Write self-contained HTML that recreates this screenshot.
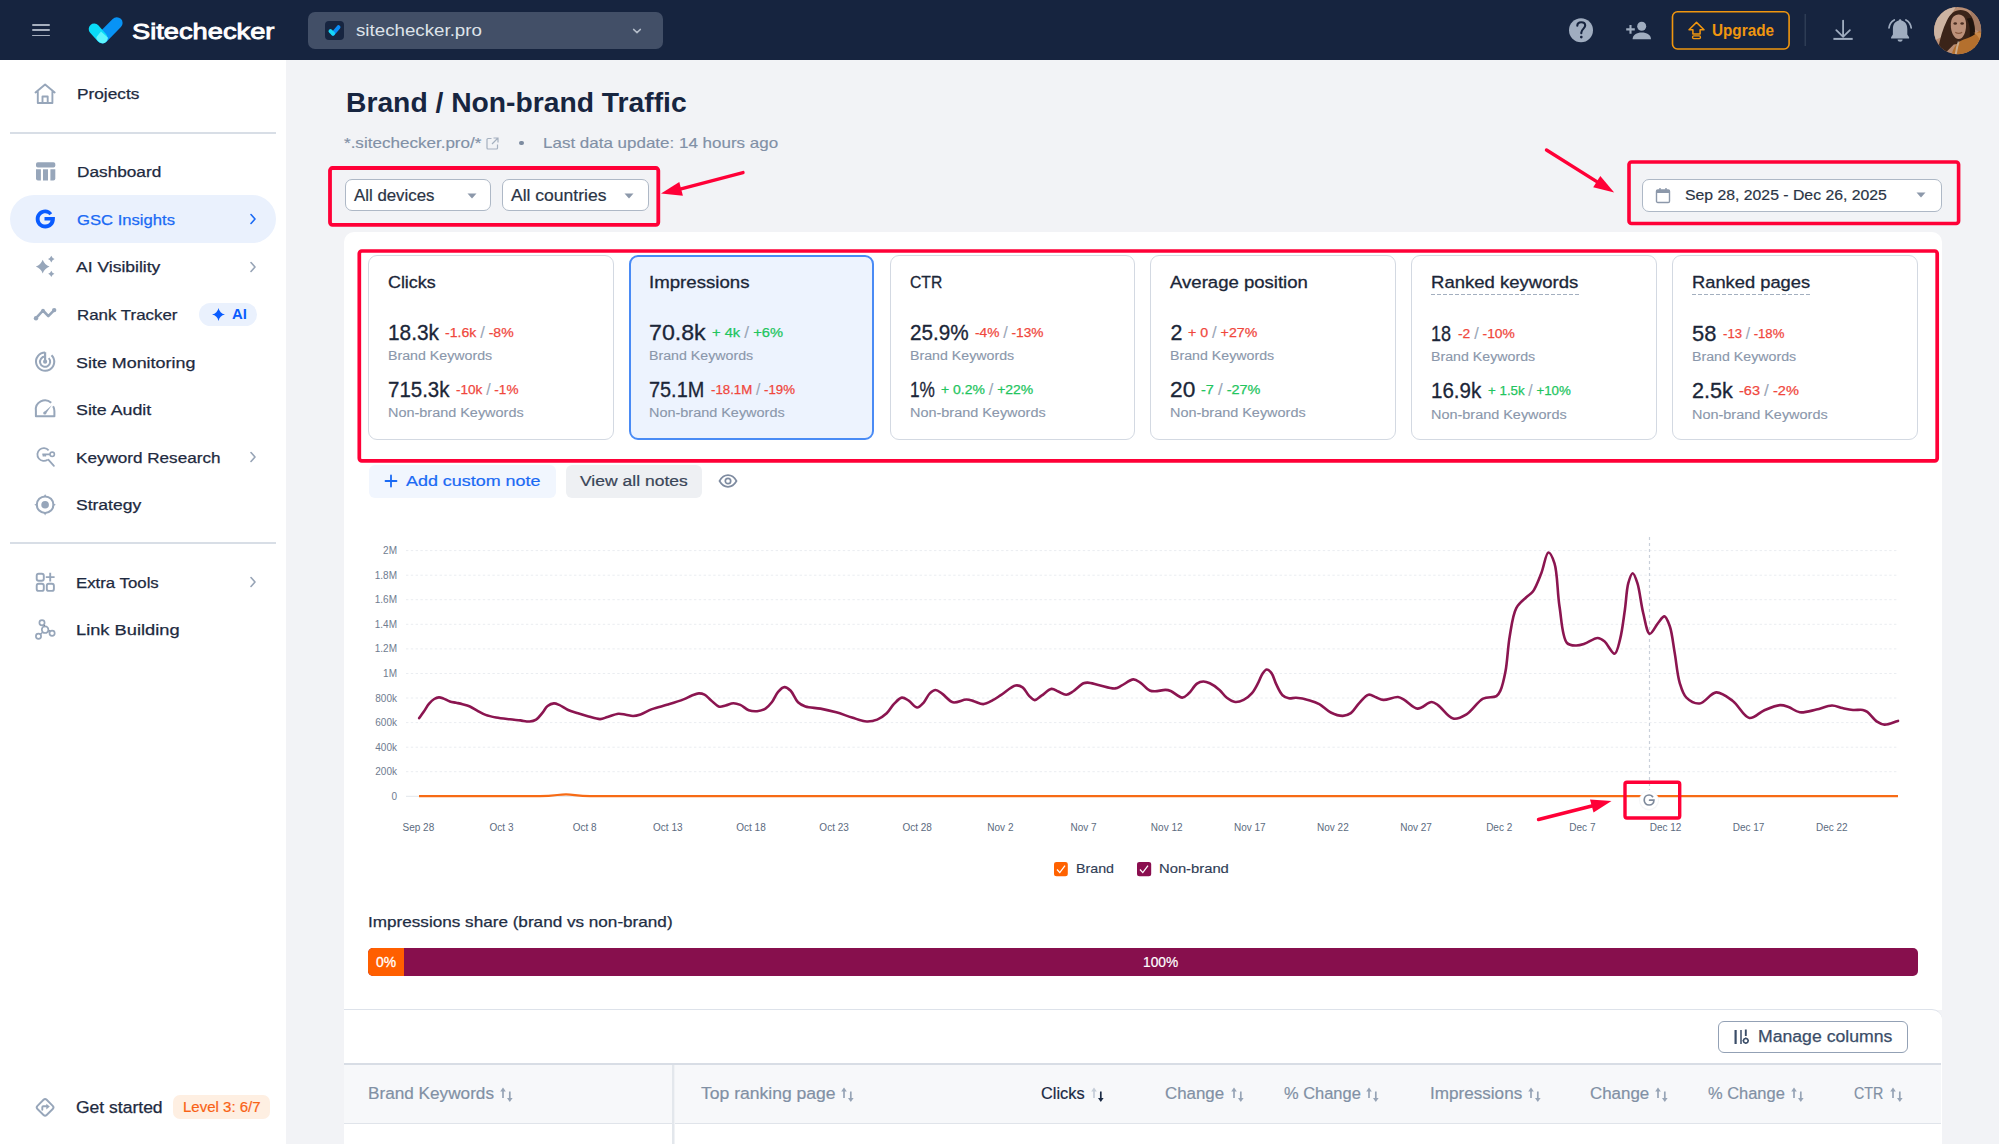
<!DOCTYPE html>
<html><head><meta charset="utf-8"><title>Brand / Non-brand Traffic</title>
<style>
html,body{margin:0;padding:0;width:1999px;height:1144px;overflow:hidden;background:#F2F3F6;}
body{position:relative;font-family:"Liberation Sans",sans-serif;}
.t{position:absolute;line-height:1;white-space:nowrap;}
.r{position:absolute;}
.a{position:absolute;overflow:visible;}
svg text{font-family:"Liberation Sans",sans-serif;}
</style></head><body>
<div class="r" style="left:0.0px;top:0.0px;width:1999.0px;height:1144.0px;background:#F2F3F6;"></div>
<div class="r" style="left:0.0px;top:60.0px;width:286.0px;height:1084.0px;background:#FFFFFF;"></div>
<div class="r" style="left:0.0px;top:0.0px;width:1999.0px;height:60.0px;background:#16243F;"></div>
<div class="r" style="left:31.5px;top:24.2px;width:18.0px;height:1.6px;background:#A6AFBE;border-radius:1px;"></div>
<div class="r" style="left:31.5px;top:29.2px;width:18.0px;height:1.6px;background:#A6AFBE;border-radius:1px;"></div>
<div class="r" style="left:31.5px;top:34.7px;width:18.0px;height:1.6px;background:#A6AFBE;border-radius:1px;"></div>
<svg class="a" style="left:0;top:0" width="140" height="60" viewBox="0 0 140 60">
<defs><clipPath id="lgc"><line x1="117.2" y1="22.6" x2="102.4" y2="37.6" stroke="#000" stroke-width="12" stroke-linecap="round"/><path d="M117.2 22.6 L102.4 37.6" stroke="#000" stroke-width="12"/></clipPath></defs>
<line x1="116.8" y1="23.0" x2="102.4" y2="37.6" stroke="#0893F5" stroke-width="11.6" stroke-linecap="round"/>
<line x1="94.2" y1="29.0" x2="101.9" y2="37.6" stroke="#0ADCF8" stroke-width="11" stroke-linecap="round"/>
<path d="M96.5 37 L101 31.5 L108 37.8 C107.5 42 104.5 43.8 101.9 43.3 C100 43 98.5 41.5 96.5 39 Z" fill="#5EF5FD"/>
</svg>
<div class="t" style="left:131.5px;top:19px;font-size:22.52px;line-height:25px;color:#FFFFFF;transform:scaleX(1.2102);transform-origin:0 0;-webkit-text-stroke:0.90px #FFFFFF;">Sitechecker</div>
<div class="r" style="left:308.4px;top:11.6px;width:354.6px;height:37.8px;background:#424F67;border-radius:7px;"></div>
<div class="r" style="left:325.0px;top:20.6px;width:19.0px;height:19.4px;background:#172540;border-radius:4px;"></div>
<svg class="a" style="left:325px;top:20.6px" width="19" height="19.4" viewBox="0 0 19 19">
<line x1="13.5" y1="6" x2="8" y2="12.5" stroke="#0B8DF7" stroke-width="4" stroke-linecap="round"/>
<line x1="5.5" y1="10" x2="8" y2="12.5" stroke="#16D8F7" stroke-width="4" stroke-linecap="round"/>
</svg>
<div class="t" style="left:356.0px;top:21px;font-size:16.81px;line-height:19px;color:#DEE3EA;transform:scaleX(1.1143);transform-origin:0 0;">sitechecker.pro</div>
<svg class="a" style="left:631px;top:26.5px" width="12" height="8" viewBox="0 0 12 8"><path d="M2.6 2.4 L6 5.6 L9.4 2.4" fill="none" stroke="#B3BCC9" stroke-width="1.5" stroke-linecap="round" stroke-linejoin="round"/></svg>
<svg class="a" style="left:1500px;top:0" width="499" height="60" viewBox="1500 0 499 60">
<circle cx="1581" cy="30.2" r="12" fill="#A0ADC0"/>
<path d="M1577.3 25.8 C1577.3 23.5 1579 22.2 1581.2 22.2 C1583.5 22.2 1585.2 23.6 1585.2 25.6 C1585.2 28.4 1581.6 28.9 1581.3 32.6 L1581.3 33.3" fill="none" stroke="#16233E" stroke-width="2.1" stroke-linecap="round"/>
<circle cx="1581.3" cy="37.1" r="1.35" fill="#16233E"/>
<circle cx="1641.7" cy="26.2" r="4.5" fill="#A0ADC0"/>
<path d="M1632.6 39.2 C1632.6 34.6 1636.8 32.4 1641.8 32.4 C1646.8 32.4 1651 34.6 1651 39.2 Z" fill="#A0ADC0"/>
<path d="M1626.2 29.4 L1634.8 29.4 M1630.5 25.1 L1630.5 33.7" stroke="#A0ADC0" stroke-width="2.1"/>
<rect x="1672.5" y="11.8" width="116.6" height="37.2" rx="5" fill="none" stroke="#F0960F" stroke-width="1.6"/>
<path d="M1696.5 22.4 L1704 29.7 L1700.1 29.7 L1700.1 34 L1692.9 34 L1692.9 29.7 L1689 29.7 Z" fill="none" stroke="#F0960F" stroke-width="1.5" stroke-linejoin="round"/>
<rect x="1692.6" y="35.9" width="7.8" height="2.7" rx="1" fill="none" stroke="#F0960F" stroke-width="1.4"/>
<rect x="1804.6" y="14" width="1.2" height="32" fill="#34425A"/>
<path d="M1843.1 20.6 L1843.1 36.6 M1836.3 30.1 L1843.1 36.8 L1849.9 30.1" fill="none" stroke="#A0ADC0" stroke-width="1.8" stroke-linecap="round"/>
<path d="M1833.4 38.9 L1852.7 38.9" stroke="#A0ADC0" stroke-width="2"/>
<path d="M1900.1 19.2 C1900.9 19.2 1901.4 19.8 1901.4 20.6 C1905.6 21.6 1907.3 25 1907.3 29 L1907.3 34.4 L1909.1 37.2 L1909.1 38.5 L1891.1 38.5 L1891.1 37.2 L1892.9 34.4 L1892.9 29 C1892.9 25 1894.6 21.6 1898.8 20.6 C1898.8 19.8 1899.3 19.2 1900.1 19.2 Z" fill="#A0ADC0"/>
<path d="M1897.6 39.6 L1902.6 39.6 C1902.6 41 1901.5 41.8 1900.1 41.8 C1898.7 41.8 1897.6 41 1897.6 39.6 Z" fill="#A0ADC0"/>
<path d="M1894.3 19.9 C1891.3 21.6 1889.4 24.4 1889 27.8 M1905.9 19.9 C1908.9 21.6 1910.8 24.4 1911.2 27.8" fill="none" stroke="#A0ADC0" stroke-width="1.7" stroke-linecap="round"/>
</svg>
<svg class="a" style="left:1933.7px;top:6.7px" width="47.4" height="47.4" viewBox="0 0 48 48">
<defs><clipPath id="av"><circle cx="24" cy="24" r="24"/></clipPath></defs>
<g clip-path="url(#av)">
<rect width="48" height="48" fill="#B98E74"/>
<path d="M0 0 L22 0 L14 14 L9 30 L0 34 Z" fill="#CDB4A2"/>
<path d="M36 0 L48 0 L48 26 L40 22 Z" fill="#A37A62"/>
<path d="M4 44 C6 32 9 22 13 14 C16 7 21 3 27 3 C33 3 38 7 40 14 C42 21 42 28 41 34 L35 36 L20 38 L10 48 Z" fill="#3B2419"/>
<path d="M17 18 C17 11 20.5 7.5 25 7.5 C29.5 7.5 32.5 11 32.5 18 C32.5 26 29.5 32.5 25 32.5 C20.5 32.5 17 26 17 18 Z" fill="#BC917A"/>
<ellipse cx="21.5" cy="16.8" rx="1.8" ry="1.3" fill="#4A2E22"/><ellipse cx="28.5" cy="16.8" rx="1.8" ry="1.3" fill="#4A2E22"/>
<path d="M21.5 25.5 C23.5 27 26.5 27 28.5 25.5" stroke="#8A5A40" stroke-width="1.2" fill="none"/>
<path d="M33 12 C36 16 37 24 36 33 L41 33 C42 25 41 17 38 11 Z" fill="#1F140E"/>
<path d="M18 48 C20 40 24 35 30 33 C36 31 42 28 46 24 L48 26 L48 48 Z" fill="#B4702E"/>
<path d="M40 26 C44 28 47 33 48 38 L48 26 Z" fill="#C98A4A"/>
<path d="M22 48 C23 42 24 38 25 35" stroke="#D9D2CC" stroke-width="2" fill="none" opacity="0.6"/>
</g></svg>
<div class="t" style="left:1712.0px;top:21px;font-size:16.23px;line-height:18px;color:#F0960F;transform:scaleX(0.9417);transform-origin:0 0;font-weight:700;">Upgrade</div>
<div class="t" style="left:77.2px;top:86px;font-size:14.86px;line-height:16px;color:#1E2A40;transform:scaleX(1.1611);transform-origin:0 0;-webkit-text-stroke:0.25px #1E2A40;">Projects</div>
<div class="r" style="left:10.0px;top:131.6px;width:266.0px;height:2.0px;background:#D8DEE6;"></div>
<div class="t" style="left:76.9px;top:163px;font-size:15.29px;line-height:17px;color:#1E2A40;transform:scaleX(1.1272);transform-origin:0 0;-webkit-text-stroke:0.25px #1E2A40;">Dashboard</div>
<div class="r" style="left:10.0px;top:195.2px;width:266.0px;height:47.5px;background:#EAF1FD;border-radius:24px;"></div>
<div class="t" style="left:76.9px;top:211px;font-size:15.29px;line-height:17px;color:#1A6AF4;transform:scaleX(1.0883);transform-origin:0 0;-webkit-text-stroke:0.25px #1A6AF4;">GSC Insights</div>
<div class="t" style="left:76.4px;top:258px;font-size:15.00px;line-height:17px;color:#1E2A40;transform:scaleX(1.1669);transform-origin:0 0;-webkit-text-stroke:0.25px #1E2A40;">AI Visibility</div>
<div class="t" style="left:76.9px;top:307px;font-size:14.71px;line-height:16px;color:#1E2A40;transform:scaleX(1.1491);transform-origin:0 0;-webkit-text-stroke:0.25px #1E2A40;">Rank Tracker</div>
<div class="r" style="left:199.0px;top:302.5px;width:58.1px;height:23.2px;background:#EAF1FD;border-radius:12px;"></div>
<div class="t" style="left:232.0px;top:306px;font-size:14.78px;line-height:16px;color:#0A5CFE;transform:scaleX(1.0079);transform-origin:0 0;font-weight:700;">AI</div>
<svg class="a" style="left:211.5px;top:308px" width="13" height="13" viewBox="0 0 13 13"><path d="M6.5 0 Q7.6 5.4 13 6.5 Q7.6 7.6 6.5 13 Q5.4 7.6 0 6.5 Q5.4 5.4 6.5 0 Z" fill="#0A5CFE"/></svg>
<div class="t" style="left:76.4px;top:354px;font-size:15.29px;line-height:17px;color:#1E2A40;transform:scaleX(1.1708);transform-origin:0 0;-webkit-text-stroke:0.25px #1E2A40;">Site Monitoring</div>
<div class="t" style="left:76.4px;top:401px;font-size:15.29px;line-height:17px;color:#1E2A40;transform:scaleX(1.1657);transform-origin:0 0;-webkit-text-stroke:0.25px #1E2A40;">Site Audit</div>
<div class="t" style="left:76.4px;top:449px;font-size:15.29px;line-height:17px;color:#1E2A40;transform:scaleX(1.1188);transform-origin:0 0;-webkit-text-stroke:0.25px #1E2A40;">Keyword Research</div>
<div class="t" style="left:76.4px;top:496px;font-size:15.29px;line-height:17px;color:#1E2A40;transform:scaleX(1.1452);transform-origin:0 0;-webkit-text-stroke:0.25px #1E2A40;">Strategy</div>
<div class="r" style="left:10.0px;top:542.4px;width:266.0px;height:2.0px;background:#D8DEE6;"></div>
<div class="t" style="left:76.4px;top:574px;font-size:15.29px;line-height:17px;color:#1E2A40;transform:scaleX(1.0991);transform-origin:0 0;-webkit-text-stroke:0.25px #1E2A40;">Extra Tools</div>
<div class="t" style="left:76.4px;top:621px;font-size:15.29px;line-height:17px;color:#1E2A40;transform:scaleX(1.1949);transform-origin:0 0;-webkit-text-stroke:0.25px #1E2A40;">Link Building</div>
<div class="t" style="left:76.3px;top:1099px;font-size:15.58px;line-height:17px;color:#1E2A40;transform:scaleX(1.1239);transform-origin:0 0;-webkit-text-stroke:0.25px #1E2A40;">Get started</div>
<div class="r" style="left:173.3px;top:1095.2px;width:97.0px;height:23.8px;background:#FEEFE2;border-radius:7px;"></div>
<div class="t" style="left:183.1px;top:1098px;font-size:15.25px;line-height:17px;color:#F96215;transform:scaleX(0.9844);transform-origin:0 0;-webkit-text-stroke:0.20px #F96215;">Level 3: 6/7</div>
<svg class="a" style="left:249px;top:213.3px" width="8" height="12" viewBox="0 0 8 12"><path d="M2 1.5 L6 6 L2 10.5" fill="none" stroke="#1A6AF4" stroke-width="1.6" stroke-linecap="round" stroke-linejoin="round"/></svg>
<svg class="a" style="left:249px;top:260.5px" width="8" height="12" viewBox="0 0 8 12"><path d="M2 1.5 L6 6 L2 10.5" fill="none" stroke="#97A4B6" stroke-width="1.6" stroke-linecap="round" stroke-linejoin="round"/></svg>
<svg class="a" style="left:249px;top:450.5px" width="8" height="12" viewBox="0 0 8 12"><path d="M2 1.5 L6 6 L2 10.5" fill="none" stroke="#97A4B6" stroke-width="1.6" stroke-linecap="round" stroke-linejoin="round"/></svg>
<svg class="a" style="left:249px;top:575.5px" width="8" height="12" viewBox="0 0 8 12"><path d="M2 1.5 L6 6 L2 10.5" fill="none" stroke="#97A4B6" stroke-width="1.6" stroke-linecap="round" stroke-linejoin="round"/></svg>
<svg class="a" style="left:0;top:0" width="286" height="1144" viewBox="0 0 286 1144"><path d="M35.5 92.5 L45.1 84.5 L54.7 92.5 M37.8 91 L37.8 103 L52.4 103 L52.4 91 M42.5 103 L42.5 96.5 L47.7 96.5 L47.7 103" fill="none" stroke="#97A6BA" stroke-width="1.9" stroke-linejoin="round" stroke-linecap="round"/><rect x="36" y="162.3" width="19.3" height="5.3" rx="1.8" fill="#97A6BA"/><path d="M36 169.3 L40.9 169.3 L40.9 180.5 L38 180.5 Q36 180.5 36 178.5 Z" fill="#97A6BA"/><rect x="43" y="169.3" width="5" height="11.2" fill="#97A6BA"/><path d="M50.4 169.3 L55.3 169.3 L55.3 178.5 Q55.3 180.5 53.3 180.5 L50.4 180.5 Z" fill="#97A6BA"/><path d="M52.2 213.3 C50.6 211 48.2 209.5 45.3 209.5 C39.9 209.5 35.7 213.7 35.7 219 C35.7 224.3 39.9 228.4 45.3 228.4 C50.6 228.4 54.9 224.7 54.9 218.4 L54.9 216.9 L44.5 216.9 L44.5 220.6 L50.6 220.6 C49.9 223.2 48 224.6 45.3 224.6 C42 224.6 39.6 222.1 39.6 219 C39.6 215.8 42 213.3 45.3 213.3 C47 213.3 48.3 214 49.3 215.2 Z" fill="#0A5CFF"/><path d="M42.70 259.80 Q44.60 264.70 49.50 266.60 Q44.60 268.50 42.70 273.40 Q40.80 268.50 35.90 266.60 Q40.80 264.70 42.70 259.80 Z" fill="#97A6BA"/><path d="M51.30 255.80 Q52.22 258.18 54.60 259.10 Q52.22 260.02 51.30 262.40 Q50.38 260.02 48.00 259.10 Q50.38 258.18 51.30 255.80 Z" fill="#97A6BA"/><path d="M51.30 270.70 Q52.17 272.93 54.40 273.80 Q52.17 274.67 51.30 276.90 Q50.43 274.67 48.20 273.80 Q50.43 272.93 51.30 270.70 Z" fill="#97A6BA"/><path d="M36 318.2 L43 310.5 L48.3 316.1 L54.2 310.1" fill="none" stroke="#97A6BA" stroke-width="2.6" stroke-linecap="round" stroke-linejoin="round"/><circle cx="36" cy="318.2" r="2.2" fill="#97A6BA"/><circle cx="54.2" cy="310.1" r="2.2" fill="#97A6BA"/><circle cx="43" cy="310.5" r="1.8" fill="#97A6BA"/><path d="M45.1 352.6 A9.1 9.1 0 1 0 51.5 355.2" fill="none" stroke="#97A6BA" stroke-width="2"/><path d="M45.1 356.6 A5.1 5.1 0 1 0 48.7 358.1" fill="none" stroke="#97A6BA" stroke-width="2"/><path d="M45.1 352.2 L45.1 361.7" stroke="#97A6BA" stroke-width="2.2"/><circle cx="45.1" cy="361.7" r="2.1" fill="#97A6BA"/><path d="M51.2 402.8 A9.2 9.2 0 0 0 35.9 410.9 L35.9 416.2 L54.4 416.2 L54.4 410.9 A9.2 9.2 0 0 0 53.1 406.3" fill="none" stroke="#97A6BA" stroke-width="2" stroke-linejoin="round"/><path d="M43.6 412.4 L51.8 405.3 L46 413.6 Z" fill="#97A6BA"/><circle cx="44.8" cy="413" r="1.6" fill="#97A6BA"/><path d="M48.6 450.3 A6.4 6.4 0 1 0 47.7 459.6" fill="none" stroke="#97A6BA" stroke-width="1.8"/><path d="M48.3 459.6 L53.9 465.9" stroke="#97A6BA" stroke-width="1.8" stroke-linecap="round"/><path d="M42.3 454.3 L50 454.3 M43.5 454.3 L43.5 456.5 M45.3 454.3 L45.3 456.5" stroke="#97A6BA" stroke-width="1.7"/><circle cx="52.2" cy="454.3" r="2.2" fill="none" stroke="#97A6BA" stroke-width="1.6"/><circle cx="45.1" cy="504.7" r="8.3" fill="none" stroke="#97A6BA" stroke-width="2"/><circle cx="45.1" cy="504.7" r="3.8" fill="#97A6BA"/><path d="M45.1 494 L43.6 497 L46.6 497 Z M45.1 515.4 L43.6 512.4 L46.6 512.4 Z M34.3 504.7 L37.3 503.2 L37.3 506.2 Z M55.9 504.7 L52.9 503.2 L52.9 506.2 Z" fill="#97A6BA"/><rect x="36.7" y="573.7" width="7.1" height="7.1" rx="2" fill="none" stroke="#97A6BA" stroke-width="1.9"/><rect x="36.7" y="583.8" width="7.1" height="7.1" rx="2" fill="none" stroke="#97A6BA" stroke-width="1.9"/><rect x="46.8" y="583.8" width="7.1" height="7.1" rx="2" fill="none" stroke="#97A6BA" stroke-width="1.9"/><path d="M50.2 572.7 L50.2 581.4 M45.8 577.1 L54.6 577.1" stroke="#97A6BA" stroke-width="1.9"/><path d="M42 622.7 L45.1 629.7 L52.1 633.2 M45.1 629.7 L38.5 636.3" stroke="#97A6BA" stroke-width="1.6"/><circle cx="42" cy="622.7" r="2.6" fill="#fff" stroke="#97A6BA" stroke-width="1.7"/><circle cx="45.1" cy="629.7" r="3.3" fill="#fff" stroke="#97A6BA" stroke-width="1.7"/><circle cx="52.1" cy="633.2" r="2.6" fill="#fff" stroke="#97A6BA" stroke-width="1.7"/><circle cx="38.5" cy="636.3" r="2.6" fill="#fff" stroke="#97A6BA" stroke-width="1.7"/><rect x="38.6" y="1100.9" width="13" height="13" rx="2.2" transform="rotate(45 45.1 1107.4)" fill="none" stroke="#97A6BA" stroke-width="1.9"/><path d="M42.3 1109.8 L42.3 1107.2 Q42.3 1106.3 43.2 1106.3 L47 1106.3" fill="none" stroke="#97A6BA" stroke-width="1.9" stroke-linecap="round"/><path d="M46.3 1103.8 L49.8 1106.6 L46.3 1109.4 Z" fill="#97A6BA"/></svg>
<div class="t" style="left:345.7px;top:87px;font-size:27.25px;line-height:31px;color:#172540;transform:scaleX(1.0369);transform-origin:0 0;font-weight:700;">Brand / Non-brand Traffic</div>
<div class="t" style="left:344.1px;top:135px;font-size:14.77px;line-height:16px;color:#8190A6;transform:scaleX(1.1546);transform-origin:0 0;-webkit-text-stroke:0.15px #8190A6;">*.sitechecker.pro/*</div>
<svg class="a" style="left:486px;top:137px" width="13" height="13" viewBox="0 0 13 13">
<path d="M5.5 1.5 L2 1.5 C1.5 1.5 1 2 1 2.5 L1 11 C1 11.5 1.5 12 2 12 L10.5 12 C11 12 11.5 11.5 11.5 11 L11.5 7.5" fill="none" stroke="#A5B0BF" stroke-width="1.2"/>
<path d="M7.5 1 L12 1 L12 5.5 M12 1 L6 7" fill="none" stroke="#A5B0BF" stroke-width="1.2"/></svg>
<div class="r" style="left:519.3px;top:140.8px;width:4.6px;height:4.6px;background:#7D8BA0;border-radius:3px;"></div>
<div class="t" style="left:543.3px;top:135px;font-size:14.77px;line-height:16px;color:#8190A6;transform:scaleX(1.1500);transform-origin:0 0;-webkit-text-stroke:0.15px #8190A6;">Last data update: 14 hours ago</div>
<div class="r" style="left:344.6px;top:179.0px;width:146.9px;height:32.3px;border:1.5px solid #AEB8C6;border-radius:7px;box-sizing:border-box;background:#FFFFFF;"></div>
<div class="r" style="left:501.6px;top:179.0px;width:147.0px;height:32.3px;border:1.5px solid #AEB8C6;border-radius:7px;box-sizing:border-box;background:#FFFFFF;"></div>
<div class="t" style="left:353.5px;top:186px;font-size:16.26px;line-height:18px;color:#2A3445;transform:scaleX(1.0356);transform-origin:0 0;-webkit-text-stroke:0.20px #2A3445;">All devices</div>
<div class="t" style="left:510.6px;top:186px;font-size:16.26px;line-height:18px;color:#2A3445;transform:scaleX(1.0780);transform-origin:0 0;-webkit-text-stroke:0.20px #2A3445;">All countries</div>
<svg class="a" style="left:466.6px;top:193px" width="10" height="6" viewBox="0 0 10 6"><path d="M0.5 0.5 L9.5 0.5 L5 5.5 Z" fill="#8C98AA"/></svg>
<svg class="a" style="left:624.0px;top:193px" width="10" height="6" viewBox="0 0 10 6"><path d="M0.5 0.5 L9.5 0.5 L5 5.5 Z" fill="#8C98AA"/></svg>
<div class="r" style="left:1642.0px;top:179.0px;width:300.0px;height:33.0px;border:1.5px solid #AEB8C6;border-radius:7px;box-sizing:border-box;background:#FFFFFF;"></div>
<svg class="a" style="left:1655px;top:187px" width="16" height="17" viewBox="0 0 16 17">
<rect x="1.5" y="3" width="13" height="12.5" rx="1.3" fill="none" stroke="#8C98AA" stroke-width="1.4"/>
<rect x="1.5" y="3" width="13" height="3" fill="#8C98AA"/>
<path d="M5 1 L5 4 M11 1 L11 4" stroke="#8C98AA" stroke-width="1.4"/></svg>
<div class="t" style="left:1685.0px;top:186px;font-size:15.39px;line-height:17px;color:#2A3445;transform:scaleX(1.0268);transform-origin:0 0;-webkit-text-stroke:0.20px #2A3445;">Sep 28, 2025 - Dec 26, 2025</div>
<svg class="a" style="left:1916px;top:192px" width="10" height="6" viewBox="0 0 10 6"><path d="M0.5 0.5 L9.5 0.5 L5 5.5 Z" fill="#8C98AA"/></svg>
<div class="r" style="left:343.5px;top:232.0px;width:1598.5px;height:778.0px;background:#FFFFFF;border-radius:10px 10px 0 0;"></div>
<div class="r" style="left:343.5px;top:1009.3px;width:1598.5px;height:134.7px;background:#FFFFFF;border-top:1.6px solid #DDE2EA;border-radius:0 10px 0 0;box-sizing:border-box;"></div>
<div class="r" style="left:368.0px;top:255.3px;width:245.5px;height:184.4px;background:#FFFFFF;border:1.3px solid #D3D9E2;border-radius:9px;box-sizing:border-box;"></div>
<div class="t" style="left:388.0px;top:273px;font-size:16.64px;line-height:19px;color:#1B2638;transform:scaleX(1.0747);transform-origin:0 0;-webkit-text-stroke:0.30px #1B2638;">Clicks</div>
<div class="t" style="left:388.0px;top:321px;font-size:21.42px;line-height:24px;color:#1B2638;transform:scaleX(0.9734);transform-origin:0 0;-webkit-text-stroke:0.30px #1B2638;">18.3k</div>
<div class="t" style="left:444.5px;top:325px;font-size:13.41px;line-height:15px;color:#F0473D;transform:scaleX(1.0481);transform-origin:0 0;-webkit-text-stroke:0.25px #F0473D;">-1.6k <span style="color:#9AA6B7;-webkit-text-stroke:0.1px #9AA6B7;font-size:1.18em;vertical-align:-0.08em">/</span> -8%</div>
<div class="t" style="left:388.0px;top:348px;font-size:13.09px;line-height:15px;color:#8A97AB;transform:scaleX(1.0857);transform-origin:0 0;-webkit-text-stroke:0.12px #8A97AB;">Brand Keywords</div>
<div class="t" style="left:388.0px;top:378px;font-size:21.42px;line-height:24px;color:#1B2638;transform:scaleX(0.9564);transform-origin:0 0;-webkit-text-stroke:0.30px #1B2638;">715.3k</div>
<div class="t" style="left:455.5px;top:382px;font-size:13.41px;line-height:15px;color:#F0473D;transform:scaleX(1.0107);transform-origin:0 0;-webkit-text-stroke:0.25px #F0473D;">-10k <span style="color:#9AA6B7;-webkit-text-stroke:0.1px #9AA6B7;font-size:1.18em;vertical-align:-0.08em">/</span> -1%</div>
<div class="t" style="left:388.0px;top:405px;font-size:13.09px;line-height:15px;color:#8A97AB;transform:scaleX(1.1041);transform-origin:0 0;-webkit-text-stroke:0.12px #8A97AB;">Non-brand Keywords</div>
<div class="r" style="left:628.8px;top:255.3px;width:245.5px;height:184.4px;background:#EDF3FE;border:2px solid #4A8BF5;border-radius:9px;box-sizing:border-box;"></div>
<div class="t" style="left:648.8px;top:273px;font-size:16.64px;line-height:19px;color:#1B2638;transform:scaleX(1.1212);transform-origin:0 0;-webkit-text-stroke:0.30px #1B2638;">Impressions</div>
<div class="t" style="left:648.8px;top:321px;font-size:21.42px;line-height:24px;color:#1B2638;transform:scaleX(1.0816);transform-origin:0 0;-webkit-text-stroke:0.30px #1B2638;">70.8k</div>
<div class="t" style="left:711.5px;top:325px;font-size:13.41px;line-height:15px;color:#22C55E;transform:scaleX(1.0958);transform-origin:0 0;-webkit-text-stroke:0.25px #22C55E;">+ 4k <span style="color:#9AA6B7;-webkit-text-stroke:0.1px #9AA6B7;font-size:1.18em;vertical-align:-0.08em">/</span> +6%</div>
<div class="t" style="left:648.8px;top:348px;font-size:13.09px;line-height:15px;color:#8A97AB;transform:scaleX(1.0857);transform-origin:0 0;-webkit-text-stroke:0.12px #8A97AB;">Brand Keywords</div>
<div class="t" style="left:648.8px;top:378px;font-size:21.42px;line-height:24px;color:#1B2638;transform:scaleX(0.9292);transform-origin:0 0;-webkit-text-stroke:0.30px #1B2638;">75.1M</div>
<div class="t" style="left:710.7px;top:382px;font-size:13.41px;line-height:15px;color:#F0473D;transform:scaleX(0.9888);transform-origin:0 0;-webkit-text-stroke:0.25px #F0473D;">-18.1M <span style="color:#9AA6B7;-webkit-text-stroke:0.1px #9AA6B7;font-size:1.18em;vertical-align:-0.08em">/</span> -19%</div>
<div class="t" style="left:648.8px;top:405px;font-size:13.09px;line-height:15px;color:#8A97AB;transform:scaleX(1.1041);transform-origin:0 0;-webkit-text-stroke:0.12px #8A97AB;">Non-brand Keywords</div>
<div class="r" style="left:889.6px;top:255.3px;width:245.5px;height:184.4px;background:#FFFFFF;border:1.3px solid #D3D9E2;border-radius:9px;box-sizing:border-box;"></div>
<div class="t" style="left:909.6px;top:273px;font-size:16.64px;line-height:19px;color:#1B2638;transform:scaleX(0.9422);transform-origin:0 0;-webkit-text-stroke:0.30px #1B2638;">CTR</div>
<div class="t" style="left:909.6px;top:321px;font-size:21.42px;line-height:24px;color:#1B2638;transform:scaleX(0.9666);transform-origin:0 0;-webkit-text-stroke:0.30px #1B2638;">25.9%</div>
<div class="t" style="left:974.5px;top:325px;font-size:13.41px;line-height:15px;color:#F0473D;transform:scaleX(1.0231);transform-origin:0 0;-webkit-text-stroke:0.25px #F0473D;">-4% <span style="color:#9AA6B7;-webkit-text-stroke:0.1px #9AA6B7;font-size:1.18em;vertical-align:-0.08em">/</span> -13%</div>
<div class="t" style="left:909.6px;top:348px;font-size:13.09px;line-height:15px;color:#8A97AB;transform:scaleX(1.0857);transform-origin:0 0;-webkit-text-stroke:0.12px #8A97AB;">Brand Keywords</div>
<div class="t" style="left:909.6px;top:378px;font-size:21.42px;line-height:24px;color:#1B2638;transform:scaleX(0.8062);transform-origin:0 0;-webkit-text-stroke:0.30px #1B2638;">1%</div>
<div class="t" style="left:940.8px;top:382px;font-size:13.41px;line-height:15px;color:#22C55E;transform:scaleX(1.0409);transform-origin:0 0;-webkit-text-stroke:0.25px #22C55E;">+ 0.2% <span style="color:#9AA6B7;-webkit-text-stroke:0.1px #9AA6B7;font-size:1.18em;vertical-align:-0.08em">/</span> +22%</div>
<div class="t" style="left:909.6px;top:405px;font-size:13.09px;line-height:15px;color:#8A97AB;transform:scaleX(1.1041);transform-origin:0 0;-webkit-text-stroke:0.12px #8A97AB;">Non-brand Keywords</div>
<div class="r" style="left:1150.4px;top:255.3px;width:245.5px;height:184.4px;background:#FFFFFF;border:1.3px solid #D3D9E2;border-radius:9px;box-sizing:border-box;"></div>
<div class="t" style="left:1170.4px;top:273px;font-size:16.64px;line-height:19px;color:#1B2638;transform:scaleX(1.1159);transform-origin:0 0;-webkit-text-stroke:0.30px #1B2638;">Average position</div>
<div class="t" style="left:1170.4px;top:321px;font-size:21.42px;line-height:24px;color:#1B2638;-webkit-text-stroke:0.30px #1B2638;">2</div>
<div class="t" style="left:1188.0px;top:325px;font-size:13.41px;line-height:15px;color:#F0473D;transform:scaleX(1.0570);transform-origin:0 0;-webkit-text-stroke:0.25px #F0473D;">+ 0 <span style="color:#9AA6B7;-webkit-text-stroke:0.1px #9AA6B7;font-size:1.18em;vertical-align:-0.08em">/</span> +27%</div>
<div class="t" style="left:1170.4px;top:348px;font-size:13.09px;line-height:15px;color:#8A97AB;transform:scaleX(1.0857);transform-origin:0 0;-webkit-text-stroke:0.12px #8A97AB;">Brand Keywords</div>
<div class="t" style="left:1170.4px;top:378px;font-size:21.42px;line-height:24px;color:#1B2638;transform:scaleX(1.0611);transform-origin:0 0;-webkit-text-stroke:0.30px #1B2638;">20</div>
<div class="t" style="left:1201.4px;top:382px;font-size:13.41px;line-height:15px;color:#22C55E;transform:scaleX(1.0780);transform-origin:0 0;-webkit-text-stroke:0.25px #22C55E;">-7 <span style="color:#9AA6B7;-webkit-text-stroke:0.1px #9AA6B7;font-size:1.18em;vertical-align:-0.08em">/</span> -27%</div>
<div class="t" style="left:1170.4px;top:405px;font-size:13.09px;line-height:15px;color:#8A97AB;transform:scaleX(1.1041);transform-origin:0 0;-webkit-text-stroke:0.12px #8A97AB;">Non-brand Keywords</div>
<div class="r" style="left:1411.2px;top:255.3px;width:245.5px;height:184.4px;background:#FFFFFF;border:1.3px solid #D3D9E2;border-radius:9px;box-sizing:border-box;"></div>
<div class="t" style="left:1431.2px;top:273px;font-size:16.64px;line-height:19px;color:#1B2638;transform:scaleX(1.1144);transform-origin:0 0;-webkit-text-stroke:0.30px #1B2638;">Ranked keywords</div>
<div class="r" style="left:1430.7px;top:293.7px;width:148.7px;height:1.6px;background:repeating-linear-gradient(90deg,#A3AFBF 0 3.6px,transparent 3.6px 6px);"></div>
<div class="t" style="left:1431.2px;top:322px;font-size:21.42px;line-height:24px;color:#1B2638;transform:scaleX(0.8414);transform-origin:0 0;-webkit-text-stroke:0.30px #1B2638;">18</div>
<div class="t" style="left:1457.5px;top:326px;font-size:13.41px;line-height:15px;color:#F0473D;transform:scaleX(1.0322);transform-origin:0 0;-webkit-text-stroke:0.25px #F0473D;">-2 <span style="color:#9AA6B7;-webkit-text-stroke:0.1px #9AA6B7;font-size:1.18em;vertical-align:-0.08em">/</span> -10%</div>
<div class="t" style="left:1431.2px;top:349px;font-size:13.09px;line-height:15px;color:#8A97AB;transform:scaleX(1.0857);transform-origin:0 0;-webkit-text-stroke:0.12px #8A97AB;">Brand Keywords</div>
<div class="t" style="left:1431.2px;top:379px;font-size:21.42px;line-height:24px;color:#1B2638;transform:scaleX(0.9601);transform-origin:0 0;-webkit-text-stroke:0.30px #1B2638;">16.9k</div>
<div class="t" style="left:1488.4px;top:383px;font-size:13.41px;line-height:15px;color:#22C55E;transform:scaleX(0.9931);transform-origin:0 0;-webkit-text-stroke:0.25px #22C55E;">+ 1.5k <span style="color:#9AA6B7;-webkit-text-stroke:0.1px #9AA6B7;font-size:1.18em;vertical-align:-0.08em">/</span> +10%</div>
<div class="t" style="left:1431.2px;top:407px;font-size:13.09px;line-height:15px;color:#8A97AB;transform:scaleX(1.1041);transform-origin:0 0;-webkit-text-stroke:0.12px #8A97AB;">Non-brand Keywords</div>
<div class="r" style="left:1672.0px;top:255.3px;width:245.5px;height:184.4px;background:#FFFFFF;border:1.3px solid #D3D9E2;border-radius:9px;box-sizing:border-box;"></div>
<div class="t" style="left:1692.0px;top:273px;font-size:16.64px;line-height:19px;color:#1B2638;transform:scaleX(1.1013);transform-origin:0 0;-webkit-text-stroke:0.30px #1B2638;">Ranked pages</div>
<div class="r" style="left:1691.5px;top:293.7px;width:119.5px;height:1.6px;background:repeating-linear-gradient(90deg,#A3AFBF 0 3.6px,transparent 3.6px 6px);"></div>
<div class="t" style="left:1692.0px;top:322px;font-size:21.42px;line-height:24px;color:#1B2638;transform:scaleX(1.0238);transform-origin:0 0;-webkit-text-stroke:0.30px #1B2638;">58</div>
<div class="t" style="left:1722.7px;top:326px;font-size:13.41px;line-height:15px;color:#F0473D;transform:scaleX(0.9807);transform-origin:0 0;-webkit-text-stroke:0.25px #F0473D;">-13 <span style="color:#9AA6B7;-webkit-text-stroke:0.1px #9AA6B7;font-size:1.18em;vertical-align:-0.08em">/</span> -18%</div>
<div class="t" style="left:1692.0px;top:349px;font-size:13.09px;line-height:15px;color:#8A97AB;transform:scaleX(1.0857);transform-origin:0 0;-webkit-text-stroke:0.12px #8A97AB;">Brand Keywords</div>
<div class="t" style="left:1692.0px;top:379px;font-size:21.42px;line-height:24px;color:#1B2638;transform:scaleX(1.0101);transform-origin:0 0;-webkit-text-stroke:0.30px #1B2638;">2.5k</div>
<div class="t" style="left:1738.6px;top:383px;font-size:13.41px;line-height:15px;color:#F0473D;transform:scaleX(1.0871);transform-origin:0 0;-webkit-text-stroke:0.25px #F0473D;">-63 <span style="color:#9AA6B7;-webkit-text-stroke:0.1px #9AA6B7;font-size:1.18em;vertical-align:-0.08em">/</span> -2%</div>
<div class="t" style="left:1692.0px;top:407px;font-size:13.09px;line-height:15px;color:#8A97AB;transform:scaleX(1.1041);transform-origin:0 0;-webkit-text-stroke:0.12px #8A97AB;">Non-brand Keywords</div>
<div class="r" style="left:368.5px;top:465.0px;width:187.5px;height:32.5px;background:#F1F6FE;border-radius:6px;"></div>
<svg class="a" style="left:384px;top:474px" width="14" height="14" viewBox="0 0 14 14"><path d="M7 1.5 L7 12.5 M1.5 7 L12.5 7" stroke="#1A6AF4" stroke-width="1.8" stroke-linecap="round"/></svg>
<div class="t" style="left:406.4px;top:472px;font-size:15.50px;line-height:17px;color:#1A6AF4;transform:scaleX(1.1553);transform-origin:0 0;-webkit-text-stroke:0.22px #1A6AF4;">Add custom note</div>
<div class="r" style="left:566.0px;top:465.0px;width:136.0px;height:32.5px;background:#EEF0F3;border-radius:6px;"></div>
<div class="t" style="left:580.0px;top:472px;font-size:15.50px;line-height:17px;color:#3A4558;transform:scaleX(1.1303);transform-origin:0 0;-webkit-text-stroke:0.22px #3A4558;">View all notes</div>
<svg class="a" style="left:718px;top:473px" width="20" height="16" viewBox="0 0 20 16">
<path d="M1.5 8 C3.8 4 6.8 2.2 10 2.2 C13.2 2.2 16.2 4 18.5 8 C16.2 12 13.2 13.8 10 13.8 C6.8 13.8 3.8 12 1.5 8 Z" fill="none" stroke="#7E8BA0" stroke-width="1.7"/>
<circle cx="10" cy="8" r="2.7" fill="none" stroke="#7E8BA0" stroke-width="1.7"/></svg>
<svg class="a" style="left:0;top:0" width="1999" height="1144" viewBox="0 0 1999 1144">
<line x1="406" y1="550.6" x2="1898" y2="550.6" stroke="#EAEDF1" stroke-width="1" stroke-dasharray="2.4 2.4"/>
<text x="397" y="554.1" text-anchor="end" font-size="10" fill="#6F7C90">2M</text>
<line x1="406" y1="575.2" x2="1898" y2="575.2" stroke="#EAEDF1" stroke-width="1" stroke-dasharray="2.4 2.4"/>
<text x="397" y="578.7" text-anchor="end" font-size="10" fill="#6F7C90">1.8M</text>
<line x1="406" y1="599.7" x2="1898" y2="599.7" stroke="#EAEDF1" stroke-width="1" stroke-dasharray="2.4 2.4"/>
<text x="397" y="603.2" text-anchor="end" font-size="10" fill="#6F7C90">1.6M</text>
<line x1="406" y1="624.3" x2="1898" y2="624.3" stroke="#EAEDF1" stroke-width="1" stroke-dasharray="2.4 2.4"/>
<text x="397" y="627.8" text-anchor="end" font-size="10" fill="#6F7C90">1.4M</text>
<line x1="406" y1="648.9" x2="1898" y2="648.9" stroke="#EAEDF1" stroke-width="1" stroke-dasharray="2.4 2.4"/>
<text x="397" y="652.4" text-anchor="end" font-size="10" fill="#6F7C90">1.2M</text>
<line x1="406" y1="673.5" x2="1898" y2="673.5" stroke="#EAEDF1" stroke-width="1" stroke-dasharray="2.4 2.4"/>
<text x="397" y="677.0" text-anchor="end" font-size="10" fill="#6F7C90">1M</text>
<line x1="406" y1="698.0" x2="1898" y2="698.0" stroke="#EAEDF1" stroke-width="1" stroke-dasharray="2.4 2.4"/>
<text x="397" y="701.5" text-anchor="end" font-size="10" fill="#6F7C90">800k</text>
<line x1="406" y1="722.6" x2="1898" y2="722.6" stroke="#EAEDF1" stroke-width="1" stroke-dasharray="2.4 2.4"/>
<text x="397" y="726.1" text-anchor="end" font-size="10" fill="#6F7C90">600k</text>
<line x1="406" y1="747.2" x2="1898" y2="747.2" stroke="#EAEDF1" stroke-width="1" stroke-dasharray="2.4 2.4"/>
<text x="397" y="750.7" text-anchor="end" font-size="10" fill="#6F7C90">400k</text>
<line x1="406" y1="771.7" x2="1898" y2="771.7" stroke="#EAEDF1" stroke-width="1" stroke-dasharray="2.4 2.4"/>
<text x="397" y="775.2" text-anchor="end" font-size="10" fill="#6F7C90">200k</text>
<text x="397" y="799.8" text-anchor="end" font-size="10" fill="#6F7C90">0</text>
<line x1="1649.5" y1="537" x2="1649.5" y2="790" stroke="#C9D0DA" stroke-width="1.2" stroke-dasharray="3 3"/>
<line x1="406" y1="796.3" x2="1898" y2="796.3" stroke="#E1E6EC" stroke-width="1"/>
<path d="M419 796.2 L540 796.2 C555 796.2 558 794.3 566 794.3 C574 794.3 577 796.2 590 796.2 L1898 796.2" fill="none" stroke="#F76B15" stroke-width="2.2"/>
<path d="M419.20 718.10 C420.70 716.00 422.17 714.03 423.70 711.80 C425.39 709.33 427.01 706.13 428.90 703.90 C430.55 701.96 432.37 700.09 434.20 699.00 C435.72 698.09 437.32 697.46 438.90 697.40 C440.46 697.34 441.95 698.01 443.60 698.60 C445.58 699.30 447.76 700.80 449.90 701.50 C451.96 702.18 454.10 702.35 456.20 702.80 C458.30 703.25 460.33 703.62 462.50 704.20 C464.88 704.83 467.50 705.45 469.90 706.50 C472.40 707.59 474.66 709.34 477.20 710.70 C479.88 712.14 482.58 713.79 485.60 714.90 C488.84 716.10 492.35 716.79 496.10 717.50 C500.34 718.30 505.53 718.80 509.80 719.30 C513.53 719.74 516.89 720.02 520.30 720.40 C523.55 720.76 526.98 721.75 529.80 721.50 C532.14 721.29 534.15 720.82 536.10 719.60 C538.41 718.16 540.45 715.11 542.40 712.80 C544.27 710.58 545.54 707.58 547.60 706.00 C549.44 704.59 551.87 703.52 553.90 703.40 C555.72 703.29 557.28 704.10 559.20 704.90 C561.74 705.97 564.57 708.33 567.60 709.70 C570.84 711.17 574.59 712.16 578.10 713.30 C581.59 714.43 585.00 715.55 588.60 716.50 C592.33 717.49 596.70 719.19 600.10 719.10 C602.85 719.03 604.80 717.79 607.50 717.00 C610.79 716.04 615.09 713.96 618.40 713.70 C621.08 713.49 623.35 714.32 625.80 714.70 C628.25 715.08 630.66 716.04 633.10 716.00 C635.56 715.95 637.82 715.30 640.50 714.40 C643.97 713.24 647.80 710.66 652.00 709.10 C656.79 707.33 662.56 706.21 667.80 704.60 C673.06 702.98 679.12 701.14 683.50 699.40 C686.78 698.10 689.20 696.53 691.90 695.50 C694.28 694.59 696.60 693.48 698.80 693.40 C700.78 693.33 702.66 693.77 704.50 694.70 C706.71 695.82 708.60 698.32 710.90 700.20 C713.49 702.31 716.55 706.04 719.30 706.70 C721.43 707.21 723.40 706.03 725.60 705.50 C728.08 704.90 730.87 703.26 733.40 703.20 C735.76 703.15 737.97 703.91 740.30 704.90 C743.06 706.07 745.78 709.16 748.70 710.20 C751.40 711.16 754.33 711.45 757.10 711.20 C759.93 710.94 763.06 710.07 765.50 708.60 C767.96 707.12 769.84 704.81 771.80 702.30 C774.10 699.36 775.71 694.44 778.10 691.80 C780.01 689.68 782.26 687.22 784.40 687.10 C786.46 686.99 788.73 688.90 790.70 690.80 C793.38 693.39 795.18 699.62 798.00 702.30 C800.23 704.42 802.38 705.48 805.40 706.50 C809.44 707.87 815.43 707.66 820.50 708.60 C825.73 709.57 831.07 710.83 836.30 712.30 C841.58 713.79 846.83 715.94 852.00 717.50 C856.96 719.00 862.19 721.30 866.70 721.50 C870.47 721.66 873.91 720.92 877.20 719.60 C880.60 718.23 883.92 715.88 886.70 713.30 C889.54 710.67 891.35 706.59 894.00 703.90 C896.45 701.42 899.27 697.92 901.90 697.60 C904.17 697.32 906.40 699.28 908.70 700.70 C911.48 702.41 914.56 707.46 917.20 707.50 C919.44 707.54 921.56 704.84 923.50 702.80 C925.83 700.35 927.48 695.60 929.80 693.40 C931.57 691.72 933.50 690.02 935.50 690.00 C937.68 689.97 939.93 692.23 942.40 693.90 C945.61 696.07 948.92 701.34 952.90 702.30 C956.94 703.27 962.66 699.46 966.50 699.50 C969.34 699.53 971.30 700.50 973.90 701.20 C976.86 702.00 980.18 704.24 983.30 704.10 C986.48 703.96 989.79 701.75 992.80 700.20 C995.76 698.68 998.03 696.93 1001.20 694.90 C1005.37 692.23 1011.53 686.17 1015.60 685.50 C1018.24 685.07 1020.53 685.92 1022.60 687.30 C1025.09 688.96 1026.68 693.47 1028.90 695.70 C1030.75 697.56 1032.66 700.02 1034.70 700.10 C1036.85 700.18 1039.03 697.34 1041.50 695.70 C1044.52 693.69 1048.40 689.26 1051.50 688.90 C1053.91 688.62 1055.95 690.58 1058.30 691.50 C1060.84 692.50 1063.68 694.77 1066.20 694.70 C1068.57 694.63 1070.58 692.99 1073.00 691.50 C1076.22 689.52 1080.65 684.55 1083.50 683.30 C1085.11 682.59 1085.96 682.55 1087.70 682.60 C1090.61 682.68 1095.13 684.31 1099.30 685.20 C1104.16 686.24 1111.07 688.81 1115.10 688.40 C1117.73 688.13 1118.99 686.85 1121.40 685.70 C1124.79 684.09 1129.93 679.49 1133.40 679.40 C1136.00 679.34 1137.93 681.09 1140.30 682.60 C1143.32 684.52 1146.84 689.21 1149.70 690.50 C1151.59 691.35 1152.93 691.28 1155.00 691.30 C1157.91 691.33 1162.62 689.79 1165.50 689.90 C1167.54 689.98 1168.69 690.24 1170.70 691.00 C1173.88 692.21 1179.04 697.68 1182.30 697.60 C1184.74 697.54 1186.49 695.44 1188.60 693.60 C1191.39 691.16 1194.12 685.56 1197.00 683.60 C1199.06 682.20 1201.18 681.55 1203.30 681.50 C1205.44 681.44 1207.51 682.24 1209.80 683.30 C1212.82 684.70 1216.62 687.42 1219.50 689.90 C1222.26 692.28 1224.08 695.75 1226.80 697.80 C1229.35 699.71 1232.34 701.69 1235.20 702.00 C1237.95 702.30 1240.94 701.23 1243.60 699.90 C1246.57 698.42 1249.60 695.86 1252.00 693.10 C1254.55 690.16 1256.48 686.00 1258.30 682.60 C1259.93 679.55 1260.87 676.01 1262.50 673.70 C1263.76 671.90 1265.20 669.61 1266.70 669.50 C1268.20 669.39 1270.10 671.32 1271.50 673.10 C1273.48 675.63 1274.40 680.56 1276.20 684.20 C1278.05 687.93 1279.99 692.84 1282.50 695.20 C1284.37 696.96 1286.56 697.86 1288.80 698.30 C1291.09 698.75 1293.30 697.63 1296.10 697.80 C1299.97 698.03 1305.70 699.22 1309.80 700.40 C1313.31 701.41 1316.10 702.35 1319.30 704.10 C1323.08 706.17 1326.73 710.52 1330.80 712.50 C1334.62 714.36 1339.31 716.02 1342.90 715.90 C1345.83 715.80 1348.34 714.81 1350.80 713.10 C1353.87 710.97 1356.20 706.19 1359.20 703.10 C1362.14 700.06 1365.47 695.32 1368.60 694.70 C1371.07 694.21 1373.54 696.43 1376.00 697.30 C1378.44 698.16 1380.41 699.69 1383.30 699.90 C1387.32 700.20 1394.18 696.55 1398.00 697.00 C1400.60 697.31 1401.88 698.55 1404.30 699.90 C1407.96 701.93 1412.93 708.27 1417.50 708.60 C1422.03 708.93 1427.79 701.95 1431.60 702.00 C1434.22 702.03 1435.69 703.60 1438.20 705.30 C1442.34 708.10 1448.03 717.50 1453.20 718.60 C1457.51 719.52 1462.11 716.98 1466.50 714.40 C1472.11 711.10 1477.44 701.59 1483.10 698.70 C1487.46 696.48 1493.44 698.10 1496.40 696.20 C1498.54 694.83 1499.27 693.04 1500.50 690.40 C1502.55 686.00 1504.10 678.67 1505.50 671.30 C1507.37 661.46 1507.77 647.37 1509.70 636.40 C1511.46 626.42 1512.65 614.98 1516.30 608.10 C1518.90 603.21 1523.24 600.28 1526.30 597.30 C1528.66 595.00 1530.84 594.27 1532.90 591.50 C1536.02 587.31 1538.76 579.55 1541.30 573.20 C1543.95 566.58 1545.84 552.74 1548.40 552.50 C1550.33 552.32 1552.86 558.28 1554.50 563.30 C1557.56 572.71 1557.30 592.75 1559.50 606.50 C1561.54 619.23 1562.15 637.83 1567.00 643.00 C1569.44 645.60 1573.12 645.40 1576.10 645.50 C1578.92 645.59 1581.36 644.76 1584.40 643.80 C1588.37 642.54 1594.04 637.91 1597.70 638.00 C1600.33 638.06 1602.13 639.50 1604.40 641.30 C1607.73 643.93 1611.98 654.13 1614.60 653.70 C1617.14 653.29 1618.47 645.27 1620.00 639.60 C1622.17 631.57 1623.49 619.38 1624.90 609.70 C1626.23 600.61 1626.46 589.82 1628.30 583.20 C1629.48 578.96 1631.19 573.22 1632.70 573.20 C1634.22 573.18 1635.98 578.87 1637.40 583.20 C1639.75 590.38 1640.91 604.02 1643.20 613.00 C1645.14 620.62 1646.87 633.29 1649.80 633.80 C1652.11 634.21 1655.44 626.10 1658.10 623.00 C1660.27 620.46 1662.53 616.15 1664.40 616.40 C1666.48 616.68 1668.29 622.05 1669.80 626.30 C1672.13 632.88 1673.10 643.77 1674.70 652.90 C1676.40 662.57 1677.24 674.68 1679.70 682.80 C1681.51 688.76 1682.90 694.23 1686.40 697.70 C1689.68 700.96 1695.06 703.90 1699.60 703.50 C1704.94 703.03 1710.57 692.71 1716.20 692.40 C1721.65 692.10 1727.56 697.12 1732.80 701.00 C1738.71 705.38 1743.65 717.08 1749.40 718.00 C1754.25 718.78 1759.23 712.35 1764.40 710.20 C1769.54 708.06 1775.85 705.28 1780.30 705.10 C1783.46 704.97 1785.60 706.00 1788.50 707.00 C1792.03 708.22 1795.58 711.71 1799.80 712.30 C1804.69 712.98 1810.89 710.75 1816.30 709.60 C1821.63 708.47 1827.29 705.53 1832.00 705.50 C1835.85 705.48 1838.99 707.35 1842.50 708.10 C1845.99 708.85 1849.55 709.71 1853.00 710.00 C1856.31 710.28 1860.21 709.36 1862.80 709.90 C1864.64 710.28 1865.64 710.76 1867.30 711.90 C1870.08 713.81 1873.75 719.46 1877.00 721.60 C1879.49 723.24 1881.60 724.44 1884.50 724.60 C1888.31 724.82 1893.50 722.13 1898.00 720.90" fill="none" stroke="#8B1550" stroke-width="2.6" stroke-linejoin="round" stroke-linecap="round"/>
<text x="418.4" y="830.5" text-anchor="middle" font-size="10" fill="#5C6B80">Sep 28</text>
<text x="501.5" y="830.5" text-anchor="middle" font-size="10" fill="#5C6B80">Oct 3</text>
<text x="584.7" y="830.5" text-anchor="middle" font-size="10" fill="#5C6B80">Oct 8</text>
<text x="667.8" y="830.5" text-anchor="middle" font-size="10" fill="#5C6B80">Oct 13</text>
<text x="751.0" y="830.5" text-anchor="middle" font-size="10" fill="#5C6B80">Oct 18</text>
<text x="834.1" y="830.5" text-anchor="middle" font-size="10" fill="#5C6B80">Oct 23</text>
<text x="917.2" y="830.5" text-anchor="middle" font-size="10" fill="#5C6B80">Oct 28</text>
<text x="1000.4" y="830.5" text-anchor="middle" font-size="10" fill="#5C6B80">Nov 2</text>
<text x="1083.5" y="830.5" text-anchor="middle" font-size="10" fill="#5C6B80">Nov 7</text>
<text x="1166.7" y="830.5" text-anchor="middle" font-size="10" fill="#5C6B80">Nov 12</text>
<text x="1249.8" y="830.5" text-anchor="middle" font-size="10" fill="#5C6B80">Nov 17</text>
<text x="1332.9" y="830.5" text-anchor="middle" font-size="10" fill="#5C6B80">Nov 22</text>
<text x="1416.1" y="830.5" text-anchor="middle" font-size="10" fill="#5C6B80">Nov 27</text>
<text x="1499.2" y="830.5" text-anchor="middle" font-size="10" fill="#5C6B80">Dec 2</text>
<text x="1582.4" y="830.5" text-anchor="middle" font-size="10" fill="#5C6B80">Dec 7</text>
<text x="1665.5" y="830.5" text-anchor="middle" font-size="10" fill="#5C6B80">Dec 12</text>
<text x="1748.6" y="830.5" text-anchor="middle" font-size="10" fill="#5C6B80">Dec 17</text>
<text x="1831.8" y="830.5" text-anchor="middle" font-size="10" fill="#5C6B80">Dec 22</text>
<circle cx="1649" cy="800.5" r="10" fill="#F3F4F6" opacity="0.8"/><circle cx="1649" cy="800" r="9" fill="#FFFFFF"/>
<path d="M1652.6 796.6 C1651.7 795.6 1650.5 795 1649.1 795 C1646.3 795 1644.2 797.2 1644.2 800 C1644.2 802.8 1646.3 805 1649.1 805 C1651.8 805 1653.9 803.1 1653.9 800.2 L1649.6 800.2" fill="none" stroke="#7D899B" stroke-width="1.7" stroke-linecap="round"/>
<rect x="330" y="168" width="328.3" height="56.8" fill="none" stroke="#FF0037" stroke-width="3.8" rx="2.5"/>
<rect x="1629" y="162" width="329.6" height="61.5" fill="none" stroke="#FF0037" stroke-width="3.6" rx="2.5"/>
<rect x="359.3" y="251" width="1577.9" height="209.8" fill="none" stroke="#FF0037" stroke-width="3.7" rx="2.5"/>
<rect x="1625" y="782.3" width="54.7" height="35.7" fill="none" stroke="#FF0037" stroke-width="3.4" rx="2"/>
<line x1="743.0" y1="172.6" x2="681.1" y2="188.8" stroke="#FF0037" stroke-width="3.4" stroke-linecap="round"/>
<path d="M661.0 193.6 L679.3 181.9 L682.9 195.7 Z" fill="#FF0037"/>
<line x1="1546.5" y1="150.0" x2="1596.8" y2="181.6" stroke="#FF0037" stroke-width="3.4" stroke-linecap="round"/>
<path d="M1614.2 192.4 L1593.2 187.2 L1600.3 175.9 Z" fill="#FF0037"/>
<line x1="1538.5" y1="819.5" x2="1591.8" y2="806.0" stroke="#FF0037" stroke-width="3.4" stroke-linecap="round"/>
<path d="M1611.5 801.0 L1590.0 799.5 L1593.5 812.5 Z" fill="#FF0037"/>
</svg>
<svg class="a" style="left:1054px;top:862px" width="14" height="14.2" viewBox="0 0 14 14.2"><rect x="0" y="0" width="13.8" height="14.2" rx="2.5" fill="#FF6200"/><path d="M3 7.5 L5.8 10.6 L11 3.6" fill="none" stroke="#fff" stroke-width="1.3"/></svg>
<div class="t" style="left:1076.0px;top:861px;font-size:13.61px;line-height:15px;color:#2F3D55;transform:scaleX(1.0475);transform-origin:0 0;-webkit-text-stroke:0.15px #2F3D55;">Brand</div>
<svg class="a" style="left:1136.5px;top:862px" width="14.2" height="14.2" viewBox="0 0 14.2 14.2"><rect x="0" y="0" width="14.2" height="14.2" rx="2.5" fill="#8A0E4F"/><path d="M3 7.5 L5.8 10.6 L11 3.6" fill="none" stroke="#fff" stroke-width="1.3"/></svg>
<div class="t" style="left:1159.0px;top:861px;font-size:13.61px;line-height:15px;color:#2F3D55;transform:scaleX(1.0860);transform-origin:0 0;-webkit-text-stroke:0.15px #2F3D55;">Non-brand</div>
<div class="t" style="left:367.9px;top:913px;font-size:15.00px;line-height:17px;color:#1E2D44;transform:scaleX(1.1417);transform-origin:0 0;-webkit-text-stroke:0.25px #1E2D44;">Impressions share (brand vs non-brand)</div>
<div class="r" style="left:368.1px;top:947.7px;width:1549.9px;height:28.0px;background:#870F4D;border-radius:5px;"></div>
<div class="r" style="left:368.1px;top:947.7px;width:35.6px;height:28.0px;background:#FF5F00;border-radius:5px 0 0 5px;"></div>
<div class="t" style="left:375.7px;top:954px;font-size:14.61px;line-height:16px;color:#FFFFFF;transform:scaleX(0.9526);transform-origin:0 0;-webkit-text-stroke:0.30px #FFFFFF;">0%</div>
<div class="t" style="left:1143.0px;top:954px;font-size:14.81px;line-height:16px;color:#FFFFFF;transform:scaleX(0.9295);transform-origin:0 0;-webkit-text-stroke:0.20px #FFFFFF;">100%</div>
<div class="r" style="left:1718.0px;top:1020.6px;width:189.6px;height:32.2px;border:1.5px solid #93A1B5;border-radius:6px;box-sizing:border-box;background:#fff;"></div>
<svg class="a" style="left:1733px;top:1027px" width="18" height="20" viewBox="0 0 18 20">
<path d="M2.6 3 L2.6 17" stroke="#3A4D68" stroke-width="2.2"/><path d="M8 3 L8 17" stroke="#3A4D68" stroke-width="1.5"/><path d="M12.8 2.5 L12.8 9" stroke="#3A4D68" stroke-width="1.9"/>
<circle cx="12.8" cy="13.7" r="2.3" fill="none" stroke="#3A4D68" stroke-width="1.5"/><path d="M12.8 10.5 L12.8 11.3 M12.8 16.1 L12.8 16.9 M9.6 13.7 L10.4 13.7 M15.2 13.7 L16 13.7" stroke="#3A4D68" stroke-width="1.3"/></svg>
<div class="t" style="left:1758.2px;top:1027px;font-size:16.45px;line-height:18px;color:#3A4D68;transform:scaleX(1.0731);transform-origin:0 0;-webkit-text-stroke:0.25px #3A4D68;">Manage columns</div>
<div class="r" style="left:344.0px;top:1062.5px;width:1597.0px;height:61.0px;background:#F7F8FA;border-top:2px solid #D8DDE5;border-bottom:1.5px solid #E0E4EA;box-sizing:border-box;"></div>
<div class="r" style="left:671.8px;top:1064.5px;width:2.0px;height:79.5px;background:#E3E7EC;"></div>
<div class="r" style="left:673.8px;top:1064.5px;width:1.2px;height:79.5px;background:#F0F2F5;"></div>
<div class="t" style="left:368.2px;top:1084px;font-size:16.99px;line-height:19px;color:#8190A4;transform:scaleX(1.0110);transform-origin:0 0;-webkit-text-stroke:0.20px #8190A4;">Brand Keywords</div>
<svg class="a" style="left:499.6px;top:1087px" width="15" height="16" viewBox="0 0 15 16"><path d="M3 11 L3 3" stroke="#97A4B6" stroke-width="1.7"/><path d="M0.2 4.4 L3 0.6 L5.8 4.4 Z" fill="#97A4B6"/><path d="M9.8 4.5 L9.8 12.5" stroke="#97A4B6" stroke-width="1.7"/><path d="M7 11.1 L9.8 14.9 L12.6 11.1 Z" fill="#97A4B6"/></svg>
<div class="t" style="left:701.2px;top:1084px;font-size:16.99px;line-height:19px;color:#8190A4;transform:scaleX(1.0328);transform-origin:0 0;-webkit-text-stroke:0.20px #8190A4;">Top ranking page</div>
<svg class="a" style="left:841.2px;top:1087px" width="15" height="16" viewBox="0 0 15 16"><path d="M3 11 L3 3" stroke="#97A4B6" stroke-width="1.7"/><path d="M0.2 4.4 L3 0.6 L5.8 4.4 Z" fill="#97A4B6"/><path d="M9.8 4.5 L9.8 12.5" stroke="#97A4B6" stroke-width="1.7"/><path d="M7 11.1 L9.8 14.9 L12.6 11.1 Z" fill="#97A4B6"/></svg>
<div class="t" style="left:1041.0px;top:1084px;font-size:16.99px;line-height:19px;color:#1B2A44;transform:scaleX(0.9628);transform-origin:0 0;-webkit-text-stroke:0.20px #1B2A44;">Clicks</div>
<svg class="a" style="left:1090.8px;top:1087px" width="15" height="16" viewBox="0 0 15 16"><path d="M3 11 L3 3" stroke="#C5CDD8" stroke-width="1.7"/><path d="M0.2 4.4 L3 0.6 L5.8 4.4 Z" fill="#C5CDD8"/><path d="M9.8 4.5 L9.8 12.5" stroke="#1B2A44" stroke-width="1.7"/><path d="M7 11.1 L9.8 14.9 L12.6 11.1 Z" fill="#1B2A44"/></svg>
<div class="t" style="left:1164.7px;top:1084px;font-size:16.99px;line-height:19px;color:#8190A4;transform:scaleX(0.9933);transform-origin:0 0;-webkit-text-stroke:0.20px #8190A4;">Change</div>
<svg class="a" style="left:1231.3px;top:1087px" width="15" height="16" viewBox="0 0 15 16"><path d="M3 11 L3 3" stroke="#97A4B6" stroke-width="1.7"/><path d="M0.2 4.4 L3 0.6 L5.8 4.4 Z" fill="#97A4B6"/><path d="M9.8 4.5 L9.8 12.5" stroke="#97A4B6" stroke-width="1.7"/><path d="M7 11.1 L9.8 14.9 L12.6 11.1 Z" fill="#97A4B6"/></svg>
<div class="t" style="left:1283.8px;top:1084px;font-size:16.99px;line-height:19px;color:#8190A4;transform:scaleX(0.9683);transform-origin:0 0;-webkit-text-stroke:0.20px #8190A4;">% Change</div>
<svg class="a" style="left:1366.4px;top:1087px" width="15" height="16" viewBox="0 0 15 16"><path d="M3 11 L3 3" stroke="#97A4B6" stroke-width="1.7"/><path d="M0.2 4.4 L3 0.6 L5.8 4.4 Z" fill="#97A4B6"/><path d="M9.8 4.5 L9.8 12.5" stroke="#97A4B6" stroke-width="1.7"/><path d="M7 11.1 L9.8 14.9 L12.6 11.1 Z" fill="#97A4B6"/></svg>
<div class="t" style="left:1429.5px;top:1084px;font-size:16.99px;line-height:19px;color:#8190A4;transform:scaleX(1.0069);transform-origin:0 0;-webkit-text-stroke:0.20px #8190A4;">Impressions</div>
<svg class="a" style="left:1527.5px;top:1087px" width="15" height="16" viewBox="0 0 15 16"><path d="M3 11 L3 3" stroke="#97A4B6" stroke-width="1.7"/><path d="M0.2 4.4 L3 0.6 L5.8 4.4 Z" fill="#97A4B6"/><path d="M9.8 4.5 L9.8 12.5" stroke="#97A4B6" stroke-width="1.7"/><path d="M7 11.1 L9.8 14.9 L12.6 11.1 Z" fill="#97A4B6"/></svg>
<div class="t" style="left:1590.0px;top:1084px;font-size:16.99px;line-height:19px;color:#8190A4;transform:scaleX(0.9950);transform-origin:0 0;-webkit-text-stroke:0.20px #8190A4;">Change</div>
<svg class="a" style="left:1655.0px;top:1087px" width="15" height="16" viewBox="0 0 15 16"><path d="M3 11 L3 3" stroke="#97A4B6" stroke-width="1.7"/><path d="M0.2 4.4 L3 0.6 L5.8 4.4 Z" fill="#97A4B6"/><path d="M9.8 4.5 L9.8 12.5" stroke="#97A4B6" stroke-width="1.7"/><path d="M7 11.1 L9.8 14.9 L12.6 11.1 Z" fill="#97A4B6"/></svg>
<div class="t" style="left:1708.2px;top:1084px;font-size:16.99px;line-height:19px;color:#8190A4;transform:scaleX(0.9683);transform-origin:0 0;-webkit-text-stroke:0.20px #8190A4;">% Change</div>
<svg class="a" style="left:1790.8px;top:1087px" width="15" height="16" viewBox="0 0 15 16"><path d="M3 11 L3 3" stroke="#97A4B6" stroke-width="1.7"/><path d="M0.2 4.4 L3 0.6 L5.8 4.4 Z" fill="#97A4B6"/><path d="M9.8 4.5 L9.8 12.5" stroke="#97A4B6" stroke-width="1.7"/><path d="M7 11.1 L9.8 14.9 L12.6 11.1 Z" fill="#97A4B6"/></svg>
<div class="t" style="left:1854.3px;top:1084px;font-size:16.99px;line-height:19px;color:#8190A4;transform:scaleX(0.8402);transform-origin:0 0;-webkit-text-stroke:0.20px #8190A4;">CTR</div>
<svg class="a" style="left:1890.0px;top:1087px" width="15" height="16" viewBox="0 0 15 16"><path d="M3 11 L3 3" stroke="#97A4B6" stroke-width="1.7"/><path d="M0.2 4.4 L3 0.6 L5.8 4.4 Z" fill="#97A4B6"/><path d="M9.8 4.5 L9.8 12.5" stroke="#97A4B6" stroke-width="1.7"/><path d="M7 11.1 L9.8 14.9 L12.6 11.1 Z" fill="#97A4B6"/></svg>
</body></html>
